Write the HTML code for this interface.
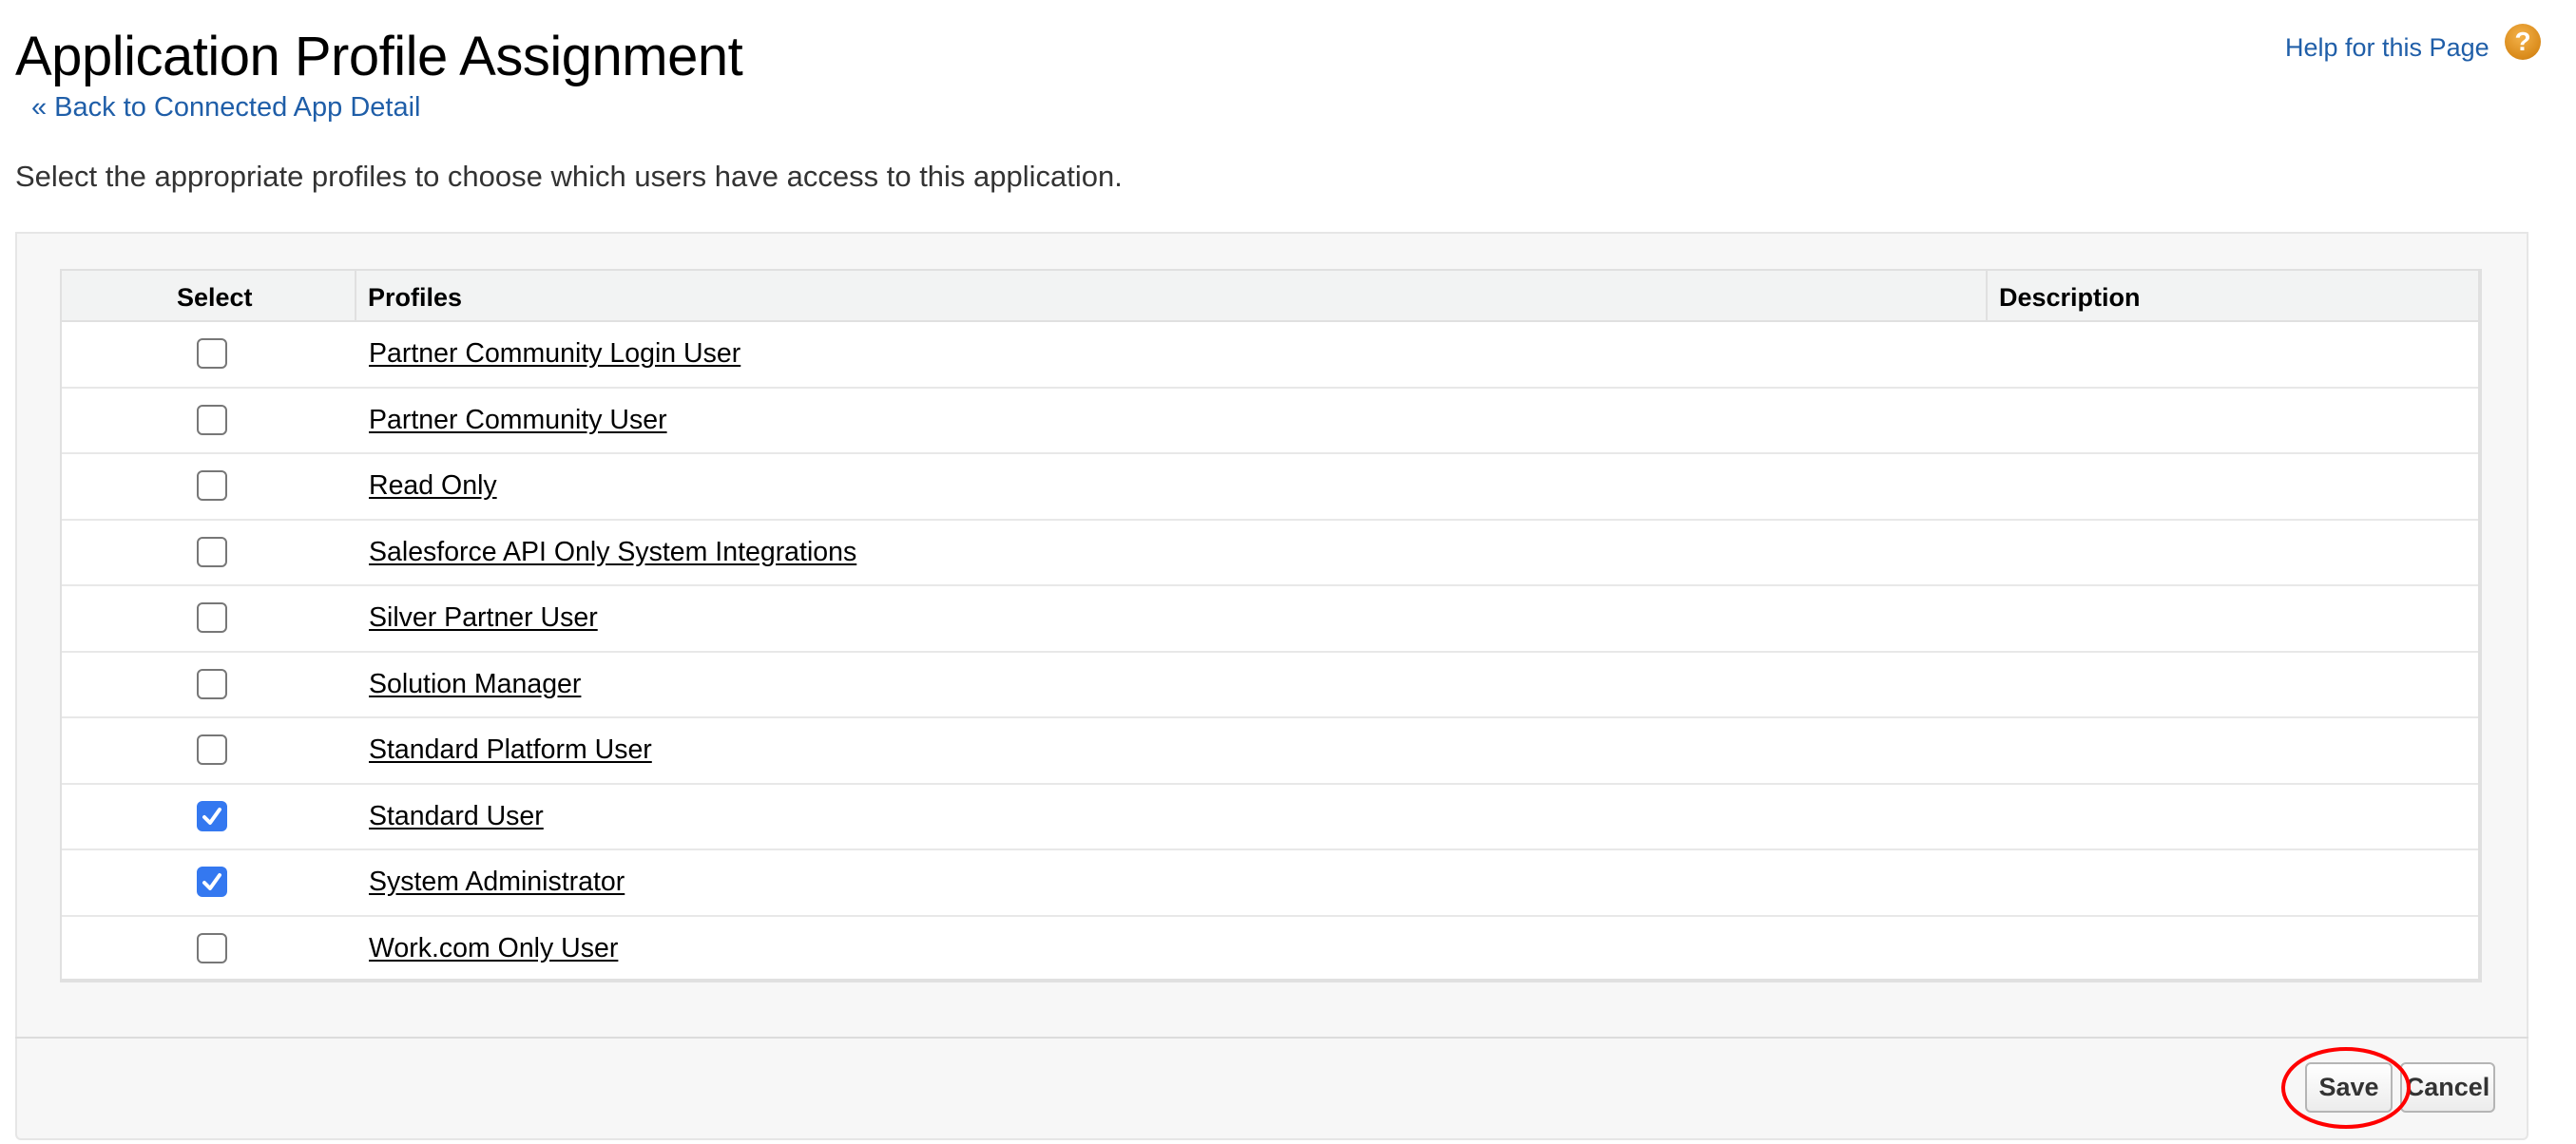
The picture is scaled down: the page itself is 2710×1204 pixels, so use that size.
<!DOCTYPE html>
<html><head><meta charset="utf-8"><style>
*{margin:0;padding:0;box-sizing:border-box}
body{width:2710px;height:1204px;background:#fff;font-family:"Liberation Sans",Arial,sans-serif;position:relative;overflow:hidden}
.abs{position:absolute}
h1{position:absolute;left:16px;top:26px;font-size:58px;font-weight:normal;color:#000;letter-spacing:-0.5px;white-space:nowrap}
.back{left:33px;top:97px;font-size:29px;color:#1f5ea8;white-space:nowrap}
.desc{left:16px;top:168px;font-size:31px;color:#333;white-space:nowrap}
.help{left:2404px;top:35px;font-size:27px;color:#1f5ea8;white-space:nowrap}
.hicon{left:2635px;top:25px;width:38px;height:38px;border-radius:50%;background:radial-gradient(circle at 45% 35%,#f4b24a,#d98a1a 70%,#b9700f);color:#fff;font-weight:bold;font-size:28px;text-align:center;line-height:38px}
.panel{left:16px;top:244px;width:2644px;height:956px;background:#f7f7f7;border:2px solid #e6e6e6;border-radius:0 0 6px 6px}
.foot{left:16px;top:1091px;width:2644px;height:2px;background:#dcdcdc}
.tbl{left:63px;top:283px;width:2548px;height:751px;background:#fff;border:2px solid #e0e0e0;border-right-width:4px;border-bottom-width:4px}
.hdr{left:0;top:0;width:100%;height:54px;background:#f2f3f3;border-bottom:2px solid #e0e0e0}
.hd{position:absolute;top:13px;font-size:27px;font-weight:bold;color:#000}
.vl{position:absolute;top:0;width:2px;height:54px;background:#e0e0e0}
.row{position:absolute;left:0;width:100%;height:69.5px;border-bottom:2px solid #e8e8e8}
.cb{position:absolute;left:142px;top:17px;width:32px;height:32px;border:2px solid #777;border-radius:6px;background:#fff}
.cb.on{border:none;background:#3478f0}
.cb.on svg{position:absolute;left:4px;top:4px}
.lbl{position:absolute;left:323px;top:17px;font-size:28.5px;color:#000;text-decoration:underline;text-underline-offset:3px;white-space:nowrap}
.btn{top:1118px;height:53px;border:2px solid #b5b5b5;border-radius:6px;background:linear-gradient(#fff,#ececec);font-weight:bold;font-size:27px;color:#333;text-align:center;line-height:49px}
</style></head><body>
<h1>Application Profile Assignment</h1>
<div class="abs back">« Back to Connected App Detail</div>
<div class="abs desc">Select the appropriate profiles to choose which users have access to this application.</div>
<div class="abs help">Help for this Page</div>
<div class="abs hicon">?</div>
<div class="abs panel"></div>
<div class="abs foot"></div>
<div class="abs tbl">
 <div class="abs hdr">
  <div class="hd" style="left:121px">Select</div>
  <div class="vl" style="left:308px"></div>
  <div class="hd" style="left:322px">Profiles</div>
  <div class="vl" style="left:2024px"></div>
  <div class="hd" style="left:2038px">Description</div>
 </div>
 <div class="row" style="top:54px"><div class="cb"></div><div class="lbl">Partner Community Login User</div></div>
 <div class="row" style="top:123.5px"><div class="cb"></div><div class="lbl">Partner Community User</div></div>
 <div class="row" style="top:193px"><div class="cb"></div><div class="lbl">Read Only</div></div>
 <div class="row" style="top:262.5px"><div class="cb"></div><div class="lbl">Salesforce API Only System Integrations</div></div>
 <div class="row" style="top:332px"><div class="cb"></div><div class="lbl">Silver Partner User</div></div>
 <div class="row" style="top:401.5px"><div class="cb"></div><div class="lbl">Solution Manager</div></div>
 <div class="row" style="top:471px"><div class="cb"></div><div class="lbl">Standard Platform User</div></div>
 <div class="row" style="top:540.5px"><div class="cb on"><svg width="24" height="24" viewBox="0 0 24 24"><path d="M4 13 L10 19 L20 5" fill="none" stroke="#fff" stroke-width="4" stroke-linecap="round" stroke-linejoin="round"/></svg></div><div class="lbl">Standard User</div></div>
 <div class="row" style="top:610px"><div class="cb on"><svg width="24" height="24" viewBox="0 0 24 24"><path d="M4 13 L10 19 L20 5" fill="none" stroke="#fff" stroke-width="4" stroke-linecap="round" stroke-linejoin="round"/></svg></div><div class="lbl">System Administrator</div></div>
 <div class="row" style="top:679.5px;border-bottom:none"><div class="cb"></div><div class="lbl">Work.com Only User</div></div>
</div>
<div class="abs btn" style="left:2425px;width:92px">Save</div>
<div class="abs btn" style="left:2525px;width:100px">Cancel</div>
<svg class="abs" style="left:2398px;top:1100px" width="140" height="90"><ellipse cx="70" cy="45" rx="66" ry="41" fill="none" stroke="#f00" stroke-width="4"/></svg>
</body></html>
